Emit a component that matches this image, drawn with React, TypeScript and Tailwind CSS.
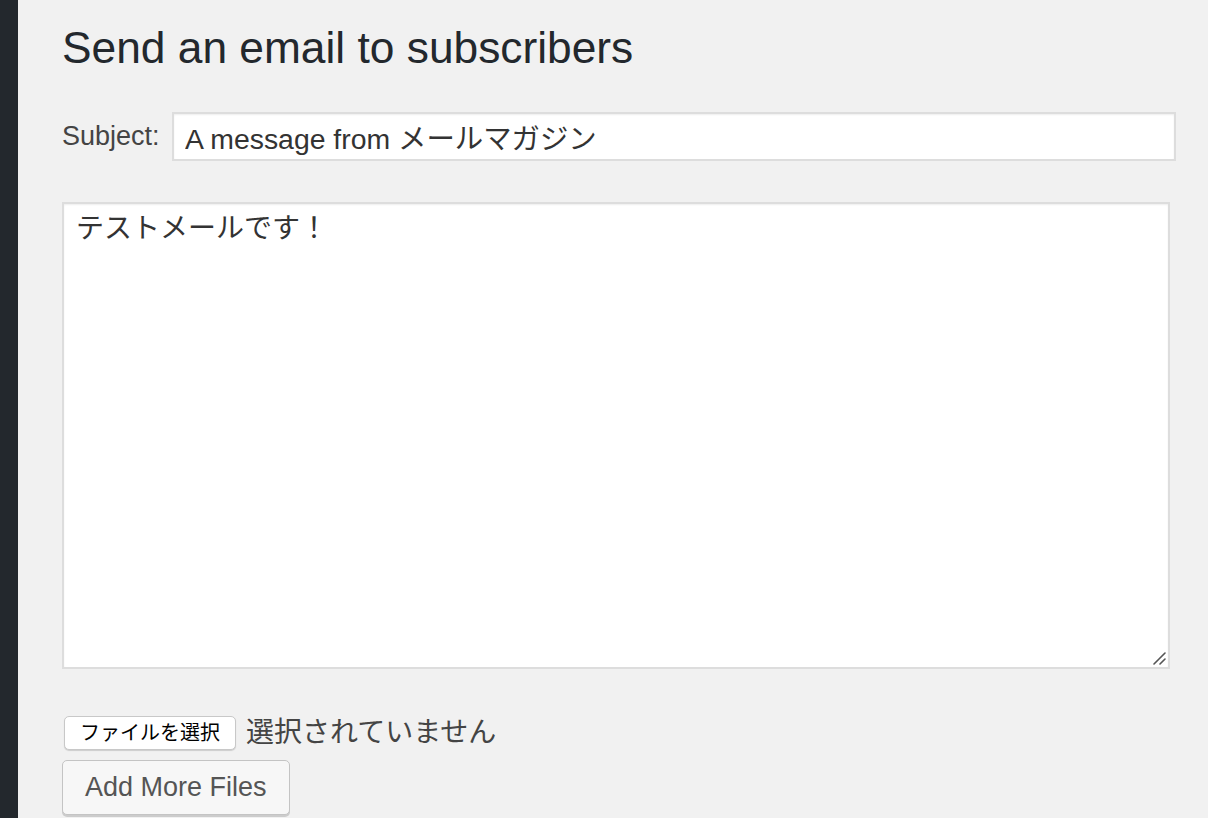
import React from 'react';

const font = { fontFamily: '"Liberation Sans", "Noto Sans CJK JP", sans-serif' };

export default function App() {
  return (
    <div className="flex min-h-[818px] w-full bg-[#f1f1f1]" style={font}>
      {/* admin sidebar edge */}
      <div className="w-[18px] shrink-0 bg-[#23282d]" />

      <div className="flex-1 pl-[44px] pr-[32px]">
        <h1 className="mt-[24px] text-[44.3px] leading-[48px] text-[#23282d]">
          Send an email to subscribers
        </h1>

        <div className="mt-[40px] flex items-center">
          <label className="w-[110px] shrink-0 text-[27px] text-[#444]">Subject:</label>
          <input
            readOnly
            defaultValue="A message from メールマガジン"
            className="h-[49px] flex-1 border-2 border-[#ddd] bg-white px-[11px] text-[28.4px] text-[#333] shadow-[inset_0_1px_2px_rgba(0,0,0,0.07)] outline-none"
            style={font}
          />
        </div>

        <div className="relative mt-[41px] mr-[6px]">
          <textarea
            readOnly
            defaultValue="テストメールです！"
            className="block h-[467px] w-full resize-none border-2 border-[#ddd] bg-white px-[12px] py-[6px] text-[28px] leading-[38px] text-[#333] shadow-[inset_0_1px_2px_rgba(0,0,0,0.07)] outline-none"
            style={font}
          />
          <svg
            className="absolute bottom-[4px] right-[4px]"
            width="14"
            height="14"
            viewBox="0 0 14 14"
          >
            <path d="M2 13 L13 2 M8 13 L13 8" stroke="#555" strokeWidth="1.6" strokeLinecap="round" />
          </svg>
        </div>

        <div className="mt-[47px] flex h-[34px] items-center">
          <button className="ml-[2px] h-[34px] rounded-[5px] border border-[#c8c8c8] bg-white px-[15px] text-[20px] leading-none text-black shadow-[0_1px_1px_rgba(0,0,0,0.15)]">
            ファイルを選択
          </button>
          <span className="ml-[10px] text-[28px] leading-none text-[#444]">選択されていません</span>
        </div>

        <button className="mt-[10px] h-[55px] rounded-[5px] border border-[#c4c4c4] bg-[#f7f7f7] px-[22px] text-[27px] leading-none text-[#555] shadow-[0_2px_0_#cccccc]">
          Add More Files
        </button>
      </div>
    </div>
  );
}
